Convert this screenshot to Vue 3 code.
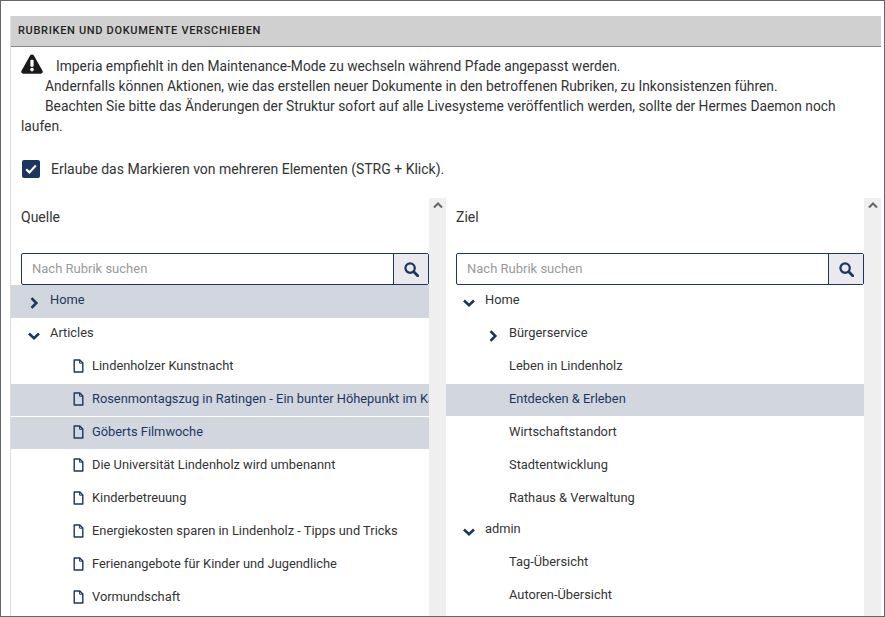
<template>
  <div class="window">
    <div class="panel">
      <h2 class="panel-title">Rubriken und Dokumente verschieben</h2>

      <div class="notice">
        <p class="notice-line">
          <svg class="warn-icon" viewBox="0 0 22 20" aria-hidden="true">
            <path d="M11 0.5c-.8 0-1.500.4-1.900 1.100L.5 16.800c-.8 1.400.2 2.900 1.900 2.900h17.200c1.700 0 2.700-1.500 1.900-2.900L12.900 1.600C12.500.9 11.800.5 11 .5z" fill="#1a1a1a" />
            <rect x="9.400" y="5.800" width="3.200" height="7" rx="1" fill="#fff" />
            <circle cx="11" cy="15.600" r="1.800" fill="#fff" />
          </svg>
          <span class="first-text">Imperia empfiehlt in den Maintenance-Mode zu wechseln während Pfade angepasst werden.</span>
        </p>
        <p class="notice-line indent">Andernfalls können Aktionen, wie das erstellen neuer Dokumente in den betroffenen Rubriken, zu Inkonsistenzen führen.</p>
        <p class="notice-line indent">Beachten Sie bitte das Änderungen der Struktur sofort auf alle Livesysteme veröffentlich werden, sollte der Hermes Daemon noch laufen.</p>
      </div>

      <label class="multi-select">
        <span class="checkbox">
          <svg viewBox="0 0 12 10" aria-hidden="true">
            <path d="M1.200 5.200l3.200 3.200 6.400-6.800" fill="none" stroke="#fff" stroke-width="2.200" />
          </svg>
        </span>
        Erlaube das Markieren von mehreren Elementen (STRG + Klick).
      </label>

      <div class="columns">
        <section v-for="col in columns" :key="col.title" class="column">
          <div class="column-body">
            <div class="column-title">{{ col.title }}</div>
            <div class="search">
              <span class="search-input">Nach Rubrik suchen</span>
              <button class="search-btn" type="button" aria-label="Suchen">
                <svg viewBox="0 0 16 16" aria-hidden="true">
                  <circle cx="6.500" cy="6.500" r="5" fill="none" stroke="#1c3660" stroke-width="2.400" />
                  <path d="M10.400 10.400l4.200 4.200" stroke="#1c3660" stroke-width="3" stroke-linecap="round" />
                </svg>
              </button>
            </div>
            <ul class="tree">
              <li
                v-for="row in col.rows"
                :key="row.label"
                class="tree-row"
                :class="['level-' + row.level, { selected: row.selected, tight: row.tight }]"
              >
                <svg v-if="row.arrow === 'right'" class="arrow" viewBox="0 0 12 12" aria-hidden="true">
                  <path d="M3.500 1.200l4.800 4.800-4.800 4.800" fill="none" stroke="#1c3660" stroke-width="2.600" />
                </svg>
                <svg v-else-if="row.arrow === 'down'" class="arrow" viewBox="0 0 12 12" aria-hidden="true">
                  <path d="M1 3.500l5 4.800 5-4.800" fill="none" stroke="#1c3660" stroke-width="2.600" />
                </svg>
                <svg v-else-if="row.doc" class="doc" viewBox="0 0 11 14" aria-hidden="true">
                  <path d="M1.200 1h5.600l3 3v9H1.200z" fill="none" stroke="#1c3660" stroke-width="1.400" stroke-linejoin="round" />
                  <path d="M6.600 1v3.200H10" fill="none" stroke="#1c3660" stroke-width="1" />
                </svg>
                <span class="row-label">{{ row.label }}</span>
              </li>
            </ul>
          </div>
          <div class="scrollbar">
            <svg viewBox="0 0 10 7" aria-hidden="true">
              <path d="M1 5.500l4-4 4 4" fill="none" stroke="#666" stroke-width="2" />
            </svg>
          </div>
        </section>
      </div>
    </div>
  </div>
</template>

<script setup>
const columns = [
  {
    title: 'Quelle',
    rows: [
      { label: 'Home', level: 0, arrow: 'right', selected: true },
      { label: 'Articles', level: 0, arrow: 'down' },
      { label: 'Lindenholzer Kunstnacht', level: 1, doc: true },
      { label: 'Rosenmontagszug in Ratingen - Ein bunter Höhepunkt im Karneval', level: 1, doc: true, selected: true },
      { label: 'Göberts Filmwoche', level: 1, doc: true, selected: true },
      { label: 'Die Universität Lindenholz wird umbenannt', level: 1, doc: true },
      { label: 'Kinderbetreuung', level: 1, doc: true },
      { label: 'Energiekosten sparen in Lindenholz - Tipps und Tricks', level: 1, doc: true },
      { label: 'Ferienangebote für Kinder und Jugendliche', level: 1, doc: true },
      { label: 'Vormundschaft', level: 1, doc: true }
    ]
  },
  {
    title: 'Ziel',
    rows: [
      { label: 'Home', level: 0, arrow: 'down' },
      { label: 'Bürgerservice', level: 2, arrow: 'right' },
      { label: 'Leben in Lindenholz', level: 2 },
      { label: 'Entdecken & Erleben', level: 2, selected: true },
      { label: 'Wirtschaftstandort', level: 2 },
      { label: 'Stadtentwicklung', level: 2 },
      { label: 'Rathaus & Verwaltung', level: 2, tight: true },
      { label: 'admin', level: 0, arrow: 'down' },
      { label: 'Tag-Übersicht', level: 2 },
      { label: 'Autoren-Übersicht', level: 2 }
    ]
  }
]
</script>

<style scoped>
.window {
  box-sizing: border-box;
  width: 885px;
  height: 617px;
  overflow: hidden;
  padding: 15px 3px 0 9px;
  background: #fff;
  border: 1px solid #666;
  font-family: Roboto, "Liberation Sans", sans-serif;
  font-size: 14px;
  color: #333;
}

.panel {
  height: 100%;
  border-left: 1px solid #ddd;
}

/* Kopfzeile */
.panel-title {
  box-sizing: border-box;
  height: 31px;
  margin: 0;
  padding: 0 7px;
  line-height: 30px;
  background: #d0d0d0;
  border-bottom: 1px solid #888;
  font-size: 11px;
  font-weight: 500;
  letter-spacing: 0.68px;
  text-transform: uppercase;
  color: #222;
}

/* Hinweis */
.notice {
  padding: 7px 10px 0;
  font-size: 13.8px;
  line-height: 20px;
}

.notice-line {
  margin: 0;
}

.notice-line.indent {
  text-indent: 24px;
}

.warn-icon {
  width: 22px;
  height: 20px;
  vertical-align: -3px;
}

.first-text {
  margin-left: 13px;
}

.multi-select {
  display: flex;
  align-items: center;
  gap: 11px;
  margin: 24px 0 0 11px;
  line-height: 18px;
}

.checkbox {
  display: flex;
  align-items: center;
  justify-content: center;
  width: 18px;
  height: 18px;
  background: #1c3660;
  border-radius: 2px;
}

.checkbox svg {
  width: 12px;
  height: 10px;
}

/* Spalten */
.columns {
  display: flex;
  margin-top: 20px;
}

.column {
  display: flex;
  width: 435px;
}

.column-body {
  width: 418px;
  overflow: hidden;
}

.column-title {
  padding: 10px 0 0 10px;
  height: 45px;
  line-height: 18px;
}

.search {
  display: flex;
  height: 32px;
  margin-left: 10px;
  box-sizing: border-box;
  border: 1px solid #1c3660;
  border-radius: 2px;
}

.search-input {
  flex: 1;
  padding-left: 10px;
  font-size: 13px;
  line-height: 29px;
  color: #9a9a9a;
}

.search-btn {
  display: flex;
  align-items: center;
  justify-content: center;
  width: 35px;
  padding: 0;
  background: #e9e9ee;
  border: 0;
  border-left: 1px solid #1c3660;
}

.search-btn svg {
  width: 15px;
  height: 15px;
}

.tree {
  margin: 0;
  padding: 0;
  list-style: none;
}

.tree-row {
  display: flex;
  align-items: center;
  height: 33px;
  padding-bottom: 5px;
  box-sizing: border-box;
  font-size: 12.85px;
  white-space: nowrap;
  overflow: hidden;
}

.tree-row.tight {
  height: 31px;
  padding-bottom: 3px;
}

.tree-row.selected {
  background: #d2d6de;
  color: #1c3660;
  margin-bottom: 1px;
  height: 32px;
  padding-bottom: 4px;
}

.tree-row.selected:first-child {
  margin-bottom: 0;
  height: 33px;
  padding-bottom: 5px;
}

.level-0 {
  padding-left: 17px;
}

.level-1 {
  padding-left: 62px;
}

.level-2 {
  padding-left: 63px;
}

.arrow {
  flex: none;
  width: 12px;
  height: 12px;
  margin-right: 10px;
  margin-top: 7px;
}

.level-2 .arrow {
  margin-left: -22px;
}

.doc {
  flex: none;
  width: 11px;
  height: 14px;
  margin-right: 8px;
  margin-top: 2px;
}

.scrollbar {
  width: 17px;
  background: #efefef;
  height: 420px;
  text-align: center;
}

.scrollbar svg {
  display: block;
  width: 10px;
  height: 7px;
  margin: 4px auto 0;
}
</style>
